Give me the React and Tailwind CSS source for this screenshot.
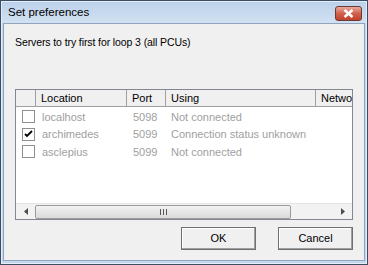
import React from "react";

const rows = [
  { loc: "localhost", port: "5098", using: "Not connected", checked: false },
  { loc: "archimedes", port: "5099", using: "Connection status unknown", checked: true },
  { loc: "asclepius", port: "5099", using: "Not connected", checked: false },
];

function Check({ checked }) {
  return (
    <div className="w-[13px] h-[13px] border border-[#8f8f8f] bg-white flex items-center justify-center">
      {checked && (
        <svg width="9" height="9" viewBox="0 0 9 9">
          <path d="M1 4 L3 6 L8 1" stroke="#000" strokeWidth="1.8" fill="none" />
        </svg>
      )}
    </div>
  );
}

export default function App() {
  const font = { fontFamily: '"Liberation Sans", Arial, sans-serif' };
  return (
    <div className="w-[368px] h-[265px] bg-[#3b4d63] p-px" style={font}>
      <div className="w-full h-full flex flex-col bg-[#c5d7ec] border border-[#e4edf7]">
        {/* title bar */}
        <div className="h-[21px] flex items-center justify-between pl-[6px] pr-[4px] bg-gradient-to-b from-[#bcd1ea] to-[#d2e1f2]">
          <span className="text-[11.5px] text-black">Set preferences</span>
          <div className="w-[27px] h-[15px] mt-[1px] rounded-[3px] border border-[#6b3a33] bg-gradient-to-b from-[#e9a99b] via-[#d0614c] to-[#c0422c] flex items-center justify-center">
            <svg width="11" height="9" viewBox="0 0 11 9">
              <path d="M1.5 1 L9.5 8 M9.5 1 L1.5 8" stroke="#fff" strokeWidth="2.4" />
            </svg>
          </div>
        </div>
        <div className="flex-1 mx-[1px] mb-[2px] border border-[#8fa5bf] bg-[#f0f0f0] flex flex-col px-[11px]">
          <div className="pt-[12px] text-[10.5px] text-black leading-[13px] tracking-[-0.1px]">
            Servers to try first for loop 3 (all PCUs)
          </div>
          <div className="mt-[40px] h-[131px] border border-[#828790] bg-white flex flex-col overflow-hidden">
            {/* header */}
            <div className="flex h-[17px] text-[11px] text-black border-b border-[#a0a0a0]">
              <div className="w-[20px] border-r border-[#a0a0a0] bg-[#f0f0f0]" />
              <div className="w-[91px] pl-[5px] flex items-center border-r border-[#a0a0a0] bg-[#f0f0f0]">Location</div>
              <div className="w-[39px] pl-[5px] flex items-center border-r border-[#a0a0a0] bg-[#f0f0f0]">Port</div>
              <div className="w-[150px] pl-[5px] flex items-center border-r border-[#a0a0a0] bg-[#f0f0f0]">Using</div>
              <div className="flex-1 min-w-0 pl-[5px] flex items-center bg-[#f0f0f0] whitespace-nowrap overflow-hidden">Netwo</div>
            </div>
            <div className="flex-1 pt-[1px]">
              {rows.map((r) => (
                <div key={r.loc} className="flex h-[17.5px] items-center text-[11px] text-[#a0a0a0]">
                  <div className="w-[20px] pl-[6px]"><Check checked={r.checked} /></div>
                  <div className="w-[91px] pl-[6px]">{r.loc}</div>
                  <div className="w-[39px] pl-[6px]">{r.port}</div>
                  <div className="w-[150px] pl-[5px] whitespace-nowrap">{r.using}</div>
                </div>
              ))}
            </div>
            {/* scrollbar */}
            <div className="h-[16px] flex bg-[#f2f2f2] border-t border-[#e6e6e6] items-center">
              <div className="w-[19px] h-full flex items-center justify-center">
                <svg width="4" height="7" viewBox="0 0 4 7"><path d="M4 0 L0 3.5 L4 7Z" fill="#4d4d4d" /></svg>
              </div>
              <div className="w-[256px] h-[14px] rounded-[2px] border border-[#9b9b9b] bg-gradient-to-b from-[#f3f3f3] to-[#dadada] flex items-center justify-center">
                <svg width="7" height="6" viewBox="0 0 7 6"><path d="M0.5 0v6M3.5 0v6M6.5 0v6" stroke="#555" /></svg>
              </div>
              <div className="flex-1" />
              <div className="w-[19px] h-full flex items-center justify-center">
                <svg width="4" height="7" viewBox="0 0 4 7"><path d="M0 0 L4 3.5 L0 7Z" fill="#4d4d4d" /></svg>
              </div>
            </div>
          </div>
          <div className="flex justify-end gap-[22px] mt-[7px]">
            <button className="w-[75px] h-[23px] text-[11px] bg-[#f0f0f0] border border-[#707070] shadow-[inset_-1px_-1px_0_#a0a0a0,inset_1px_1px_0_#fff]">OK</button>
            <button className="w-[75px] h-[23px] text-[11px] bg-[#f0f0f0] border border-[#707070] shadow-[inset_-1px_-1px_0_#a0a0a0,inset_1px_1px_0_#fff]">Cancel</button>
          </div>
        </div>
      </div>
    </div>
  );
}
